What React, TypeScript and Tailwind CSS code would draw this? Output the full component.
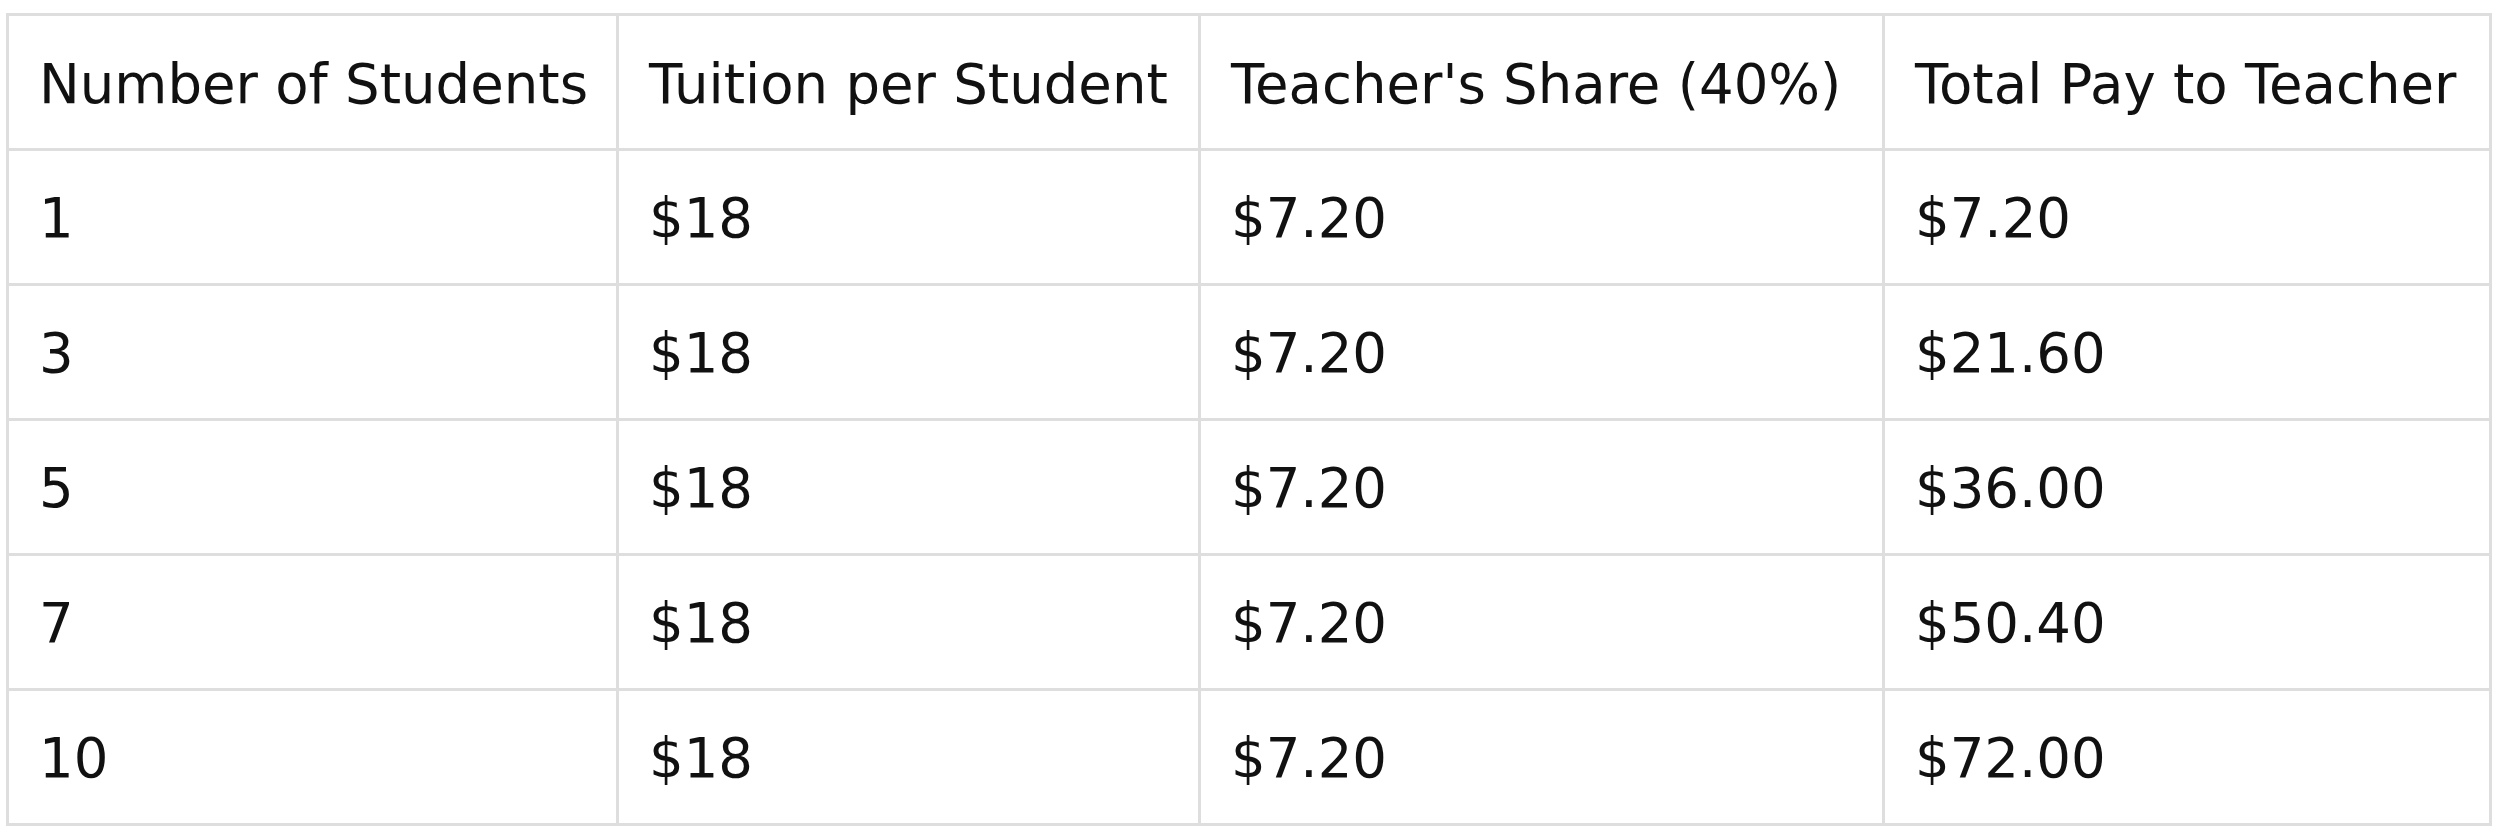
import React from "react";

const header = ["Number of Students", "Tuition per Student", "Teacher's Share (40%)", "Total Pay to Teacher"];
const rows = [
  ["1", "$18", "$7.20", "$7.20"],
  ["3", "$18", "$7.20", "$21.60"],
  ["5", "$18", "$7.20", "$36.00"],
  ["7", "$18", "$7.20", "$50.40"],
  ["10", "$18", "$7.20", "$72.00"],
];

export default function App() {
  return (
    <div className="w-[2500px] h-[840px] bg-white pt-[13px] pl-[6px]" style={{ fontFamily: '"DejaVu Sans", Verdana, sans-serif' }}>
      <table className="table-fixed border-collapse w-[2486px] text-[54.5px] text-[#111] leading-none">
        <colgroup>
          <col className="w-[610px]" />
          <col className="w-[582px]" />
          <col className="w-[684px]" />
          <col className="w-[607px]" />
        </colgroup>
        <thead>
          <tr className="h-[135px]">
            {header.map((h) => (
              <th key={h} className="border-[3px] border-[#dedede] pl-[30px] pr-[20px] pt-[5px] text-left font-normal align-middle whitespace-nowrap">
                {h}
              </th>
            ))}
          </tr>
        </thead>
        <tbody>
          {rows.map((r, i) => (
            <tr key={i} className="h-[135px]">
              {r.map((c, j) => (
                <td key={j} className="border-[3px] border-[#dedede] pl-[30px] pr-[20px] pt-[3px] text-left align-middle whitespace-nowrap">
                  {c}
                </td>
              ))}
            </tr>
          ))}
        </tbody>
      </table>
    </div>
  );
}
